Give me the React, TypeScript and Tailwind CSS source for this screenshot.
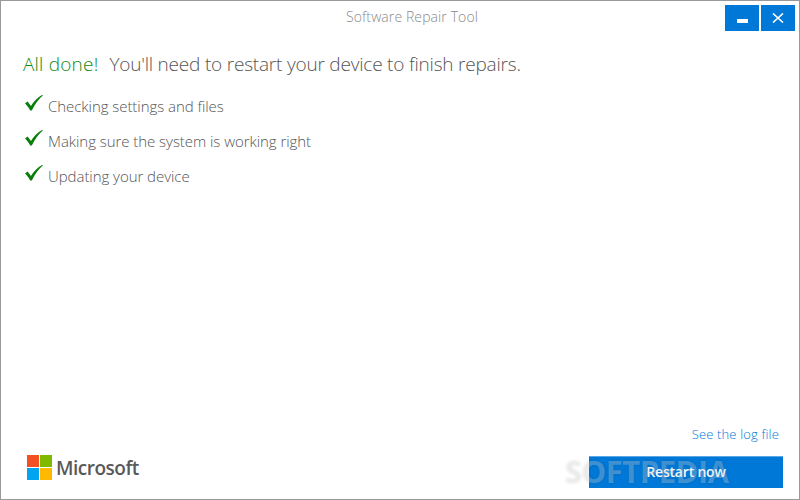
import React from 'react';

const steps = ['Checking settings and files', 'Making sure the system is working right', 'Updating your device'];

const Check = () => (
  <svg width="20" height="20" viewBox="0 0 20 18" className="shrink-0">
    <path d="M1 9.5 L3.6 7.6 L7 12 C9.5 7.8 13.5 3.6 18.4 0.8 L18.8 1.4 C14.5 5.2 11 10 7.8 16.6 L6.2 16.6 C4.8 13.8 3 11.4 1 9.5 Z" fill="#0b7d0b" />
  </svg>
);

const App: React.FC = () => {
  return (
    <div className="w-[800px] h-[500px] bg-white border border-[#999999] flex flex-col overflow-hidden font-['Open_Sans',sans-serif]">
      <div className="flex items-start h-[49px] shrink-0 relative">
        <div className="flex-1 text-center text-[14px] leading-[18px] font-light text-[#8a8a8a] pt-[7px] pl-[98px] tracking-[0.1px]">Software Repair Tool</div>
        <div className="flex gap-[2px] pt-[4px] pr-[4px]">
          <button className="w-[34px] h-[26px] bg-[#0078d7] flex items-center justify-center">
            <span className="block w-[11px] h-[4px] bg-white mt-[6px]" />
          </button>
          <button className="w-[34px] h-[26px] bg-[#0078d7] flex items-center justify-center">
            <svg width="12" height="10" viewBox="0 0 12 10"><path d="M1 0.5 L11 9.5 M11 0.5 L1 9.5" stroke="#fff" strokeWidth="1.6" /></svg>
          </button>
        </div>
      </div>

      <div className="pl-[22px] text-[19px] leading-[28px] font-light text-[#555555]">
        <span className="text-[#138a13] tracking-[0.2px]">All done!</span>
        <span className="ml-[11px] tracking-[-0.2px]">You'll need to restart your device to finish repairs.</span>
      </div>

      <div className="mt-[15px] pl-[23px] flex flex-col gap-[11px]">
        {steps.map((step) => (
          <div key={step} className="flex items-start gap-[4px] h-[24px]">
            <Check />
            <span className="text-[15px] leading-[20px] font-light text-[#555555] tracking-[-0.05px] pt-[3px]">{step}</span>
          </div>
        ))}
      </div>

      <div className="mt-auto flex justify-end pr-[20px] pb-[2px]">
        <span className="text-[13px] leading-[18px] font-light text-[#0078d7] tracking-[0.15px]">See the log file</span>
      </div>

      <div className="flex items-start justify-between pl-[26px] pr-[16px] pb-[11px] pt-[11px] relative">
        <div className="flex items-center gap-[4px] -mt-[1px]">
          <div className="grid grid-cols-2 gap-px w-[25px] h-[25px]">
            <div className="bg-[#f25022]" />
            <div className="bg-[#7fba00]" />
            <div className="bg-[#00a4ef]" />
            <div className="bg-[#ffb900]" />
          </div>
          <span className="text-[19px] leading-[24px] font-semibold text-[#595959] tracking-[-0.5px]">Microsoft</span>
        </div>
        <button className="w-[194px] h-[32px] bg-[#0078d7] border-t border-[#5ba7e6] text-white text-[14px] font-semibold tracking-[-0.2px] pb-[2px]">Restart now</button>
        {/* watermark sits over the button */}
        <span className="absolute left-[564px] top-[8px] text-[31px] leading-[36px] font-bold text-white/25 tracking-[-0.5px] pointer-events-none [text-shadow:0_0_3px_rgba(0,0,0,0.12)]">SOFTPEDIA</span>
      </div>
    </div>
  );
};

export default App;
